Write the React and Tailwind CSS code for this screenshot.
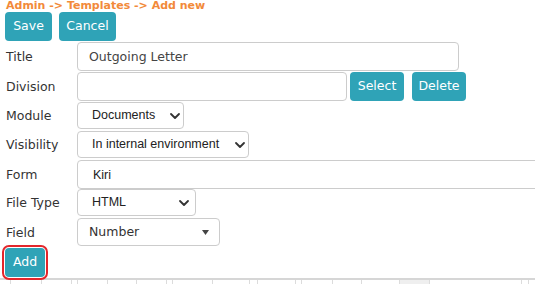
import { ChevronDown } from 'lucide-react'

const cells = [10, 31, 30, 6, 30, 29, 30, 6, 40, 37, 8, 38, 6, 31, 29, 38, 30, 92, 7, 7]

function Btn({ children, className = '' }) {
  return (
    <button className={`h-[29px] shrink-0 rounded-[4px] bg-[#2fa3b7] text-white text-[12.5px] ${className}`}>
      {children}
    </button>
  )
}

function Row({ label, className = '', children }) {
  return (
    <div className={`flex items-center ${className}`}>
      <label className="w-[72px] shrink-0 pl-px pt-[2px] text-[12.5px] text-[#333]">{label}</label>
      {children}
    </div>
  )
}

function FakeSelect({ value, className = '', arrowPad = 'pr-0' }) {
  return (
    <div className={`flex shrink-0 items-center justify-between rounded-[4px] border border-[#cccccc] bg-white pl-[14px] ${arrowPad} font-['Liberation_Sans',Arial,sans-serif] text-[12.5px] text-[#222] ${className}`}>
      <span>{value}</span>
      <ChevronDown size={16} strokeWidth={2.75} className="text-[#333]" />
    </div>
  )
}

export default function App() {
  return (
    <div className="w-[535px] h-[284px] overflow-hidden bg-white px-[5px] font-['DejaVu_Sans',Verdana,sans-serif]">
      {/* breadcrumb */}
      <div className="h-[12px] pl-px text-[11px] leading-[12px] font-bold text-[#f28a3a] whitespace-nowrap">
        Admin -&gt; Templates -&gt; Add new
      </div>

      <div className="flex gap-[7px]">
        <Btn className="w-[47px]">Save</Btn>
        <Btn className="w-[57px]">Cancel</Btn>
      </div>

      <Row label="Title" className="mt-px h-[29px]">
        <input
          defaultValue="Outgoing Letter"
          className="h-[29px] w-[382px] shrink-0 rounded-[4px] border border-[#cccccc] px-[11px] text-[12.5px] text-[#444]"
        />
      </Row>

      <Row label="Division" className="mt-px h-[29px]">
        <input className="h-[29px] w-[270px] shrink-0 rounded-[4px] border border-[#cccccc] px-[11px] text-[12.5px]" />
        <Btn className="ml-[3px] w-[54px]">Select</Btn>
        <Btn className="ml-[8px] w-[54px]">Delete</Btn>
      </Row>

      <Row label="Module" className="mt-px h-[27px]">
        <FakeSelect value="Documents" className="h-[27px] w-[107px]" />
      </Row>

      <Row label="Visibility" className="mt-[2px] h-[27px]">
        <FakeSelect value="In internal environment" className="h-[27px] w-[172px]" />
      </Row>

      <Row label="Form" className="mt-[2px] h-[29px]">
        <input
          defaultValue="Kiri"
          className="h-[29px] w-[470px] shrink-0 rounded-[4px] border border-[#cccccc] px-[15px] font-['Liberation_Sans',Arial,sans-serif] text-[12.5px] text-[#222]"
        />
      </Row>

      <Row label="File Type" className="h-[27px]">
        <FakeSelect value="HTML" className="h-[27px] w-[119px]" arrowPad="pr-[3px]" />
      </Row>

      <Row label="Field" className="mt-[2px] h-[28px]">
        <div className="flex h-[28px] w-[143px] shrink-0 items-center justify-between rounded-[4px] border border-[#cccccc] pl-[11px] pr-[10px] text-[12.5px] text-[#333]">
          <span>Number</span>
          <svg width="7" height="5" viewBox="0 0 7 5">
            <polygon points="0,0 7,0 3.5,5" fill="#444" />
          </svg>
        </div>
      </Row>

      <div className="mt-[2px] flex h-[29px]">
        <Btn className="w-[40px] outline-2 outline-offset-1 outline-[#e3262b]">Add</Btn>
      </div>

      {/* top edge of the table below */}
      <div className="-mx-[5px] mt-px flex h-[10px] border-t-2 border-[#d6d6d6]">
        {cells.map((w, i) => (
          <div
            key={i}
            style={{ width: w }}
            className={`shrink-0 ${i > 0 ? 'border-l border-[#dcdcdc]' : ''} ${i === 16 ? 'bg-[#efefef]' : ''}`}
          />
        ))}
      </div>
    </div>
  )
}
